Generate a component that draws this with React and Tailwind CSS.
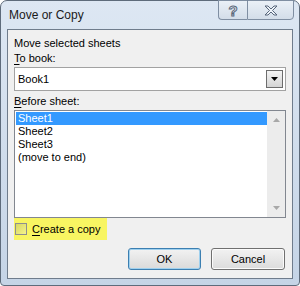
import React from 'react';

const SHEETS = ['Sheet1', 'Sheet2', 'Sheet3', '(move to end)'];

export default function App() {
  return (
    <div
      className="w-[300px] h-[286px] flex flex-col px-[6px] pb-[6px] border border-[#5e6b7b] rounded-t-[7px] rounded-b-[4px] bg-gradient-to-b from-[#dde7f3] to-[#c5d4e6] text-[#000] text-[11px]"
      style={{ fontFamily: '"Liberation Sans", Arial, sans-serif' }}
    >
      {/* Title bar */}
      <div className="h-[28px] flex items-start justify-between">
        <div className="pl-[2px] pt-[7px] leading-[15px] text-[12px] text-[#1a1a1a]">Move or Copy</div>
        <div className="flex -mt-px mr-[-1px]">
          <div className="w-[29px] h-[20px] flex items-center justify-center border border-[#7f8ea2] border-r-0 rounded-bl-[4px] bg-gradient-to-b from-[#eaf0f7] to-[#d3dde9]">
            <span
              className="text-[15px] font-bold leading-none text-[#eef3f9]"
              style={{ WebkitTextStroke: '1px #5a687b' }}
            >
              ?
            </span>
          </div>
          <div className="w-[47px] h-[20px] flex items-center justify-center border border-[#7f8ea2] rounded-br-[4px] bg-gradient-to-b from-[#eaf0f7] to-[#d3dde9]">
            <svg width="14" height="11" viewBox="0 0 14 11">
              <path
                d="M1 1h3l3 3 3-3h3l-4.5 4.5L13 10h-3L7 7l-3 3H1l4.5-4.5z"
                fill="#eef3f9"
                stroke="#56657a"
                strokeWidth="1"
                strokeLinejoin="round"
              />
            </svg>
          </div>
        </div>
      </div>

      {/* Client area */}
      <div className="flex-1 flex flex-col border border-[#6f7c8c] bg-[#f0f0f0] pl-[5px] pr-[6px] pt-[6px]">
        <div className="leading-[15px] pl-px">Move selected sheets</div>
        <div className="leading-[15px] pl-px">
          <span className="underline underline-offset-2">T</span>o book:
        </div>
        <div className="ml-[1px] mt-[1px] h-[24px] flex items-center justify-between border border-[#a2a2a2] bg-white pl-[3px] pr-[2px]">
          <span className="leading-[15px]">Book1</span>
          <div className="w-[17px] h-[18px] flex items-center justify-center border border-[#6d6d6d] bg-gradient-to-b from-[#f4f4f4] to-[#d4d4d4]">
            <svg width="7" height="4" viewBox="0 0 7 4">
              <path d="M0 0h7L3.5 4z" fill="#000" />
            </svg>
          </div>
        </div>
        <div className="leading-[15px] mt-[3px] pl-px">
          <span className="underline underline-offset-2">B</span>efore sheet:
        </div>
        <div className="ml-[1px] mt-[1px] h-[108px] flex border border-[#828790] bg-white">
          <div className="flex-1 flex flex-col pt-px pl-px">
            {SHEETS.map((s, i) => (
              <div
                key={s}
                className={`h-[13px] leading-[13px] pl-[2px] ${i === 0 ? 'bg-[#3399ff] text-white' : ''}`}
              >
                {s}
              </div>
            ))}
          </div>
          <div className="w-[18px] flex flex-col justify-between items-center bg-[#ececec] py-[7px]">
            <svg width="7" height="4" viewBox="0 0 7 4">
              <path d="M0 4h7L3.5 0z" fill="#a8a8a8" />
            </svg>
            <svg width="7" height="4" viewBox="0 0 7 4">
              <path d="M0 0h7L3.5 4z" fill="#a8a8a8" />
            </svg>
          </div>
        </div>
        <div className="flex">
          <div className="ml-[1px] h-[22px] flex items-center gap-[5px] bg-[#f8f562] pl-[1px] pr-[6px]">
            <div className="w-[12px] h-[12px] border border-[#8e8f8f] bg-gradient-to-br from-[#d8d860] to-[#f4f38c]" />
            <span className="leading-[15px]">
              <span className="underline underline-offset-2">C</span>reate a copy
            </span>
          </div>
        </div>
        <div className="mt-[8px] flex justify-end gap-[10px] pr-[1px]">
          <button className="w-[73px] h-[22px] rounded-[3px] border border-[#3c7fb1] bg-gradient-to-b from-[#f2f2f2] to-[#dadada] shadow-[inset_0_0_0_1px_#9fd0ee] leading-[15px]">
            OK
          </button>
          <button className="w-[74px] h-[22px] rounded-[3px] border border-[#707070] bg-gradient-to-b from-[#f2f2f2] to-[#dcdcdc] shadow-[inset_0_0_0_1px_#fbfbfb] leading-[15px]">
            Cancel
          </button>
        </div>
      </div>
    </div>
  );
}
